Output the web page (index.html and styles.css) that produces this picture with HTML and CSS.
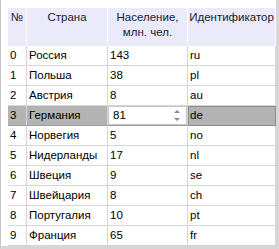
FILE: index.html
```html
<!DOCTYPE html>
<html>
<head>
<meta charset="utf-8">
<link rel="stylesheet" href="styles.css">
</head>
<body>
<div class="frame">
  <div class="grid">
    <div class="hd">№</div>
    <div class="hd">Страна</div>
    <div class="hd">Население,<br>млн. чел.</div>
    <div class="hd">Идентификатор</div>

    <div class="c">0</div><div class="c">Россия</div><div class="c">143</div><div class="c">ru</div>
    <div class="c">1</div><div class="c">Польша</div><div class="c">38</div><div class="c">pl</div>
    <div class="c">2</div><div class="c">Австрия</div><div class="c">8</div><div class="c">au</div>
    <div class="c sel">3</div><div class="c sel">Германия</div>
    <div class="c ed"><div class="spin"><span class="val">81</span><span class="arrows"><span class="up"></span><span class="down"></span></span></div></div>
    <div class="c sel cur">de</div>
    <div class="c">4</div><div class="c">Норвегия</div><div class="c">5</div><div class="c">no</div>
    <div class="c">5</div><div class="c">Нидерланды</div><div class="c">17</div><div class="c">nl</div>
    <div class="c">6</div><div class="c">Швеция</div><div class="c">9</div><div class="c">se</div>
    <div class="c">7</div><div class="c">Швейцария</div><div class="c">8</div><div class="c">ch</div>
    <div class="c">8</div><div class="c">Португалия</div><div class="c">10</div><div class="c">pt</div>
    <div class="c">9</div><div class="c">Франция</div><div class="c">65</div><div class="c">fr</div>
  </div>
</div>
</body>
</html>
```
FILE: styles.css
```css
html, body {
  margin: 0;
  padding: 0;
  background: #ffffff;
}
.frame {
  width: 279px;
  height: 249px;
  box-sizing: border-box;
  border-left: 1px solid #c4c4c4;
  border-right: 3px solid #d6d6d6;
  border-bottom: 3px solid #d6d6d6;
  padding: 8px 0 0 7px;
  overflow: hidden;
  font-family: "Liberation Sans", Arial, sans-serif;
  font-size: 11.5px;
  color: #000;
}
.grid {
  display: grid;
  grid-template-columns: 19px 81px 80px 88px;
  grid-auto-rows: 20px;
  grid-template-rows: 38px;
}
.hd {
  background: #eaeafb;
  border-right: 1px solid #ffffff;
  box-sizing: border-box;
  text-align: center;
  padding-top: 2px;
  line-height: 15px;
  color: #1a1a2a;
}
.hd:last-child { border-right: 0; }
.c {
  box-sizing: border-box;
  border-right: 1px solid #d6d6d6;
  border-bottom: 1px solid #d6d6d6;
  padding-left: 2px;
  line-height: 19px;
  white-space: nowrap;
  overflow: hidden;
}
.sel {
  background: #b3b3b3;
  border-bottom-color: #9c9c9c;
}
.cur {
  border: 1px solid #8c8c8c;
  line-height: 17px;
  padding-left: 1px;
}
.ed {
  padding: 0;
  background: #b3b3b3;
  border-bottom-color: #9c9c9c;
}
.spin {
  height: 19px;
  box-sizing: border-box;
  background: #ffffff;
  border: 1px solid #c6c6c6;
  display: flex;
  align-items: center;
  justify-content: space-between;
  padding: 0 6px 0 4px;
}
.val { line-height: 17px; }
.arrows {
  display: flex;
  flex-direction: column;
  gap: 5px;
  align-items: center;
}
.up, .down {
  width: 0;
  height: 0;
  border-left: 3px solid transparent;
  border-right: 3px solid transparent;
}
.up { border-bottom: 3px solid #8a8a8a; }
.down { border-top: 3px solid #8a8a8a; }
```
